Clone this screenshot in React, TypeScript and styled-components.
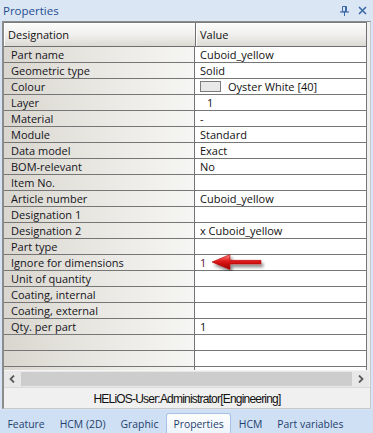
import styled, { createGlobalStyle } from 'styled-components';

const GlobalStyle = createGlobalStyle`
  html, body {
    margin: 0;
    padding: 0;
  }
  body {
    background: #d7e4f5;
  }
`;

type PropRow = {
  name: string;
  value?: string;
  swatch?: boolean;
  indent?: boolean;
  marked?: boolean;
};

const rows: PropRow[] = [
  { name: 'Part name', value: 'Cuboid_yellow' },
  { name: 'Geometric type', value: 'Solid' },
  { name: 'Colour', value: 'Oyster White [40]', swatch: true },
  { name: 'Layer', value: '1', indent: true },
  { name: 'Material', value: '-' },
  { name: 'Module', value: 'Standard' },
  { name: 'Data model', value: 'Exact' },
  { name: 'BOM-relevant', value: 'No' },
  { name: 'Item No.' },
  { name: 'Article number', value: 'Cuboid_yellow' },
  { name: 'Designation 1' },
  { name: 'Designation 2', value: 'x  Cuboid_yellow' },
  { name: 'Part type' },
  { name: 'Ignore for dimensions', value: '1', marked: true },
  { name: 'Unit of quantity' },
  { name: 'Coating, internal' },
  { name: 'Coating, external' },
  { name: 'Qty. per part', value: '1' },
  { name: '' },
  { name: '' },
  { name: '' },
];

const tabs = ['Feature', 'HCM (2D)', 'Graphic', 'Properties', 'HCM', 'Part variables'];

const PinIcon = () => (
  <svg width="9" height="10" viewBox="0 0 9 10">
    <path d="M2.5 0.5h4v5h-4z" fill="none" stroke="#3b6aa6" strokeWidth="1" />
    <path d="M5.5 0.5v5" stroke="#3b6aa6" strokeWidth="1" />
    <path d="M0 6h9" stroke="#3b6aa6" strokeWidth="1.2" />
    <path d="M4.5 6v4" stroke="#3b6aa6" strokeWidth="1" />
  </svg>
);

const CloseIcon = () => (
  <svg width="9" height="9" viewBox="0 0 9 9">
    <path d="M1 1l7 7M8 1l-7 7" stroke="#3b6aa6" strokeWidth="1.6" />
  </svg>
);

const Chevron = ({ dir }: { dir: 'left' | 'right' }) => (
  <svg width="6" height="8" viewBox="0 0 6 8">
    <path
      d={dir === 'left' ? 'M5 0.5L1.5 4L5 7.5' : 'M1 0.5L4.5 4L1 7.5'}
      fill="none"
      stroke="#5a5a5a"
      strokeWidth="1.8"
    />
  </svg>
);

const RedArrow = () => (
  <ArrowSvg width="60" height="24" viewBox="0 0 60 24">
    <defs>
      <linearGradient id="arrowFill" x1="0" y1="0" x2="0" y2="1">
        <stop offset="0" stopColor="#ff8a8a" />
        <stop offset="0.45" stopColor="#e01818" />
        <stop offset="1" stopColor="#9c0000" />
      </linearGradient>
      <filter id="arrowShadow" x="-20%" y="-40%" width="150%" height="200%">
        <feDropShadow dx="2" dy="3" stdDeviation="1.6" floodColor="#000" floodOpacity="0.45" />
      </filter>
    </defs>
    <path
      d="M1 8 L19 0.5 L19 6.3 L50 6.3 L50 9.9 L19 9.9 L19 15.5 Z"
      fill="url(#arrowFill)"
      stroke="#b00000"
      strokeWidth="0.6"
      filter="url(#arrowShadow)"
    />
  </ArrowSvg>
);

const App = () => {
  return (
    <Window>
      <GlobalStyle />
      <TitleBar>
        <TitleText>Properties</TitleText>
        <TitleButtons>
          <PinIcon />
          <CloseIcon />
        </TitleButtons>
      </TitleBar>

      <Panel>
        <GridArea>
          <HeaderRow>
            <HeaderCell>Designation</HeaderCell>
            <HeaderCell>Value</HeaderCell>
          </HeaderRow>
          <GridBody>
            {rows.map((row, i) => (
              <Row key={i}>
                <NameCell>{row.name}</NameCell>
                <ValueCell $indent={row.indent} $marked={row.marked}>
                  {row.swatch && <Swatch />}
                  {row.value}
                  {row.marked && <RedArrow />}
                </ValueCell>
              </Row>
            ))}
          </GridBody>
        </GridArea>

        <ScrollBar>
          <ScrollButton>
            <Chevron dir="left" />
          </ScrollButton>
          <ScrollThumb />
          <ScrollButton>
            <Chevron dir="right" />
          </ScrollButton>
        </ScrollBar>

        <StatusBar>HELiOS-User:Administrator[Engineering]</StatusBar>
      </Panel>

      <TabBar>
        {tabs.map((tab) => (
          <Tab key={tab} $active={tab === 'Properties'}>
            {tab}
          </Tab>
        ))}
      </TabBar>
    </Window>
  );
};

export default App;

const Window = styled.div`
  width: 373px;
  height: 433px;
  display: flex;
  flex-direction: column;
  overflow: hidden;
  background: #d7e4f5;
  font-family: 'Open Sans', 'Liberation Sans', Arial, sans-serif;
  font-size: 11px;
`;

const TitleBar = styled.div`
  height: 21px;
  display: flex;
  align-items: center;
  justify-content: space-between;
  padding: 0 6px 0 3px;
  background: #dbe6f4;
`;

const TitleText = styled.span`
  font-size: 11.5px;
  color: #1f4f8f;
`;

const TitleButtons = styled.div`
  display: flex;
  align-items: center;
  gap: 9px;
`;

const Panel = styled.div`
  flex: 1;
  min-height: 0;
  margin: 0 2px 1px 2px;
  display: flex;
  flex-direction: column;
  background: #f0f0f0;
  border-top: 1px solid #8c8c8c;
  border-left: 2px solid #8c8c8c;
  border-right: 1px solid #c8c8c8;
  border-bottom: 1px solid #c8c8c8;
`;

const GridArea = styled.div`
  flex: 1;
  min-height: 0;
  margin-right: 3px;
  display: flex;
  flex-direction: column;
  background: #ffffff;
`;

const HeaderRow = styled.div`
  height: 25px;
  box-sizing: border-box;
  display: grid;
  grid-template-columns: 191px 1fr;
  border-top: 1px solid #7a7a7a;
  border-bottom: 1px solid #6f6f6f;
  border-right: 1px solid #6f6f6f;
  background: linear-gradient(#fbfbfb, #f1f0ee 50%, #dcdad4);
`;

const HeaderCell = styled.div`
  display: flex;
  align-items: center;
  padding-left: 4px;
  color: #111;
  box-shadow: inset 1px 1px 0 #ffffff;
  & + & {
    border-left: 1px solid #6f6f6f;
  }
`;

const GridBody = styled.div`
  flex: 1;
  min-height: 0;
  overflow: hidden;
`;

const Row = styled.div`
  height: 16px;
  box-sizing: border-box;
  display: grid;
  grid-template-columns: 191px 1fr;
  border-bottom: 1px solid #767676;
  border-right: 1px solid #767676;
`;

const NameCell = styled.div`
  padding-left: 7px;
  line-height: 15px;
  color: #141420;
  white-space: nowrap;
  border-right: 1px solid #767676;
  background: linear-gradient(90deg, #d9d6cf, #e8e6e1 45%, #f6f6f4);
`;

const ValueCell = styled.div<{ $indent?: boolean; $marked?: boolean }>`
  position: relative;
  display: flex;
  align-items: center;
  padding-left: ${({ $indent }) => ($indent ? '12px' : '5px')};
  line-height: 15px;
  white-space: nowrap;
  color: ${({ $marked }) => ($marked ? '#5a1442' : '#111')};
  background: #ffffff;
`;

const Swatch = styled.span`
  width: 19px;
  height: 9px;
  margin-right: 7px;
  background: #e9e9e9;
  border: 1px solid #7d7d7d;
`;

const ArrowSvg = styled.svg`
  position: absolute;
  left: 16px;
  top: -1px;
  overflow: visible;
`;

const ScrollBar = styled.div`
  height: 16px;
  display: flex;
  align-items: stretch;
  margin-right: 1px;
  background: #e8e8e8;
  border-top: 1px solid #f4f4f4;
`;

const ScrollButton = styled.div`
  width: 16px;
  display: flex;
  align-items: center;
  justify-content: center;
`;

const ScrollThumb = styled.div`
  flex: 1;
  margin: 1px 1px;
  background: #cdcdcd;
`;

const StatusBar = styled.div`
  height: 21px;
  display: flex;
  align-items: center;
  justify-content: center;
  padding-top: 2px;
  box-sizing: border-box;
  font-family: 'Liberation Sans', Arial, sans-serif;
  font-size: 12px;
  letter-spacing: -0.8px;
  color: #111;
  background: #f0f0f0;
  border-top: 1px solid #dadada;
`;

const TabBar = styled.div`
  height: 23px;
  display: flex;
  align-items: flex-end;
  background: #cfe0f5;
`;

const Tab = styled.div<{ $active?: boolean }>`
  flex-shrink: 0;
  height: 20px;
  box-sizing: border-box;
  display: flex;
  align-items: center;
  padding: 0 6.5px;
  white-space: nowrap;
  color: #1e3e6c;
  font-size: 10.4px;
  border: 1px solid ${({ $active }) => ($active ? '#a6c2e6' : 'transparent')};
  border-bottom: none;
  border-radius: 3px 3px 0 0;
  background: ${({ $active }) =>
    $active ? 'linear-gradient(#fdfeff, #eef4fc)' : 'transparent'};
`;
